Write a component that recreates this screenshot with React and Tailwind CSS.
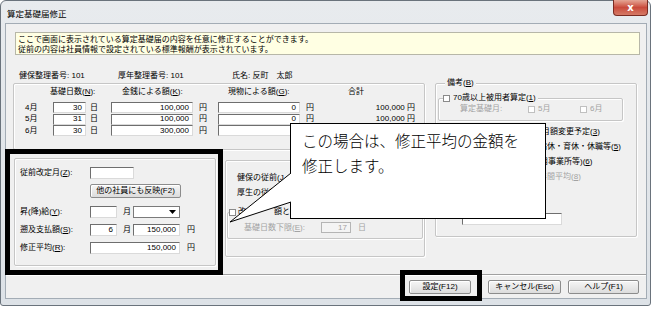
import React from "react";

const U = ({ children }) => <span className="underline">{children}</span>;

function Edit({ className = "", children }) {
  return (
    <div
      className={`bg-white border border-t-[#6e6e6e] border-l-[#6e6e6e] border-r-[#dadada] border-b-[#dadada] flex items-center justify-end pr-[3px] leading-none ${className}`}
    >
      {children}
    </div>
  );
}

function Check({ className = "" }) {
  return (
    <span
      className={`inline-block w-[7px] h-[7px] border border-[#8a8a8a] bg-white shrink-0 ${className}`}
    />
  );
}

function Group({ className = "", children }) {
  return (
    <div
      className={`relative border border-[#c6c6c6] rounded-[2px] shadow-[inset_1px_1px_0_#fff,1px_1px_0_#fff] ${className}`}
    >
      {children}
    </div>
  );
}

function Btn({ className = "", children }) {
  return (
    <div
      className={`flex items-center justify-center border border-[#8c8c8c] rounded-[2px] bg-gradient-to-b from-[#f6f6f6] to-[#dcdcdc] shadow-[inset_1px_1px_0_#fff] ${className}`}
    >
      {children}
    </div>
  );
}

export default function App() {
  return (
    <div className="relative w-[658px] h-[312px] bg-white overflow-hidden text-[8px] leading-[10px] text-black font-['Liberation_Sans','Noto_Sans_CJK_JP',sans-serif]">
      {/* window */}
      <div className="w-[651px] h-[306px] rounded-t-[6px] rounded-b-[3px] border border-[#6a737c] bg-gradient-to-b from-[#e8ebee] via-[#e2e6ea] to-[#dde2e7] flex flex-col">
        {/* title bar */}
        <div className="h-[22px] flex items-start justify-between">
          <div className="pl-[6px] pt-[8px] text-[8.5px] leading-[10px]">算定基礎届修正</div>
          <div className="mr-[2px] -mt-[1px] w-[35px] h-[16px] rounded-b-[4px] border border-t-0 border-[#7a2b22] bg-gradient-to-b from-[#e4a595] via-[#c94a3c] to-[#d57a66] flex items-center justify-center text-white text-[10px] font-bold leading-none font-['DejaVu_Sans',sans-serif]">
            x
          </div>
        </div>

        {/* client area */}
        <div className="ml-[4px] w-[642px] h-[276px] bg-[#f0f0f0] border border-[#a3acb5] flex flex-col">
          {/* info box */}
          <div className="mt-[8px] ml-[9px] w-[625px] h-[23px] bg-[#ffffe3] border border-[#b7b7a8] pl-[2px] pt-[2px] leading-[10px]">
            <div>ここで画面に表示されている算定基礎届の内容を任意に修正することができます。</div>
            <div>従前の内容は社員情報で設定されている標準報酬が表示されています。</div>
          </div>

          {/* header */}
          <div className="mt-[16px] ml-[13px] h-[10px] flex">
            <span className="w-[99px]">健保整理番号: 101</span>
            <span className="w-[114px]">厚年整理番号: 101</span>
            <span>氏名: 反町　太郎</span>
          </div>

          {/* body */}
          <div className="mt-[2px] flex">
            {/* left column */}
            <div className="ml-[7px] w-[412px] flex flex-col">
              <Group className="h-[67px]">
                <div className="mt-[3px] flex h-[10px]">
                  <span className="ml-[36px] w-[72px]">
                    基礎日数(<U>N</U>):
                  </span>
                  <span className="w-[106px]">
                    金銭による額(<U>K</U>):
                  </span>
                  <span className="w-[120px]">
                    現物による額(<U>G</U>):
                  </span>
                  <span>合計</span>
                </div>
                <div className="mt-[5px] flex flex-col gap-[0.5px]">
                  {[
                    ["4月", "30", "100,000", "0", "100,000"],
                    ["5月", "31", "100,000", "0", "100,000"],
                    ["6月", "30", "300,000", "", ""],
                  ].map((r) => (
                    <div key={r[0]} className="flex items-center h-[11px]">
                      <span className="w-[39px] pl-[11px]">{r[0]}</span>
                      <Edit className="w-[33px] h-[11px]">{r[1]}</Edit>
                      <span className="ml-[4px] w-[21px]">日</span>
                      <Edit className="w-[82px] h-[11px]">{r[2]}</Edit>
                      <span className="ml-[6px] w-[19px]">円</span>
                      <Edit className="w-[82px] h-[11px]">{r[3]}</Edit>
                      <span className="ml-[6px] w-[8px]">{r[3] ? "円" : ""}</span>
                      <span className="w-[101px] text-right">{r[4] ? `${r[4]} 円` : ""}</span>
                    </div>
                  ))}
                </div>
              </Group>

              <div className="flex items-start">
                {/* lower-left group */}
                <Group className="ml-[1px] mt-[8px] w-[202px] h-[108px]">
                  <div className="mt-[8px] flex items-center h-[12px]">
                    <span className="pl-[5px] w-[75px]">
                      従前改定月(<U>Z</U>):
                    </span>
                    <Edit className="w-[44px] h-[12px]" />
                  </div>
                  <Btn className="mt-[5px] ml-[75px] w-[91px] h-[14px]">他の社員にも反映(F2)</Btn>
                  <div className="mt-[8px] flex items-center h-[12px]">
                    <span className="pl-[5px] w-[75px]">
                      昇(降)給(<U>Y</U>):
                    </span>
                    <Edit className="w-[27px] h-[12px]" />
                    <span className="ml-[6px] w-[10px]">月</span>
                    <div className="w-[47px] h-[12px] bg-white border border-[#7a7a7a] flex items-center justify-end pr-[3px]">
                      <svg width="7" height="4" viewBox="0 0 7 4">
                        <path d="M0 0H7L3.5 4Z" fill="#000" />
                      </svg>
                    </div>
                  </div>
                  <div className="mt-[6px] flex items-center h-[12px]">
                    <span className="pl-[5px] w-[75px]">
                      遡及支払額(<U>S</U>):
                    </span>
                    <Edit className="w-[27px] h-[12px]">6</Edit>
                    <span className="ml-[6px] w-[10px]">月</span>
                    <Edit className="w-[47px] h-[12px]">150,000</Edit>
                    <span className="ml-[7px]">円</span>
                  </div>
                  <div className="mt-[6px] flex items-center h-[12px]">
                    <span className="pl-[5px] w-[75px]">
                      修正平均(<U>R</U>):
                    </span>
                    <Edit className="w-[90px] h-[12px]">150,000</Edit>
                    <span className="ml-[7px]">円</span>
                  </div>
                </Group>

                {/* middle group */}
                <Group className="ml-[9px] mt-[10px] w-[200px] h-[97px]">
                  <div className="mt-[12px] pl-[11px]">
                    健保の従前(<U>J</U>
                  </div>
                  <div className="mt-[5px] pl-[11px]">厚生の従前</div>
                  <Group className="mt-[14px] mx-[1px] h-[27px]">
                    <div className="absolute -top-[6px] left-[1px] flex items-center gap-[2px] bg-[#f0f0f0] pr-[2px]">
                      <Check />
                      <span>改</span>
                      <span className="ml-[26px]">額とす</span>
                    </div>
                    <div className="mt-[9px] flex items-center h-[11px] text-[#a3a3a3]">
                      <span className="pl-[16px] w-[93px]">
                        基礎日数下限(<U>E</U>):
                      </span>
                      <div className="w-[30px] h-[11px] bg-[#f4f4f4] border border-[#b5b5b5] flex items-center justify-end pr-[3px]">
                        17
                      </div>
                      <span className="ml-[7px]">日</span>
                    </div>
                  </Group>
                </Group>
              </div>
            </div>

            {/* right column: 備考 */}
            <Group className="ml-[10px] w-[202px] h-[154px]">
              <div className="absolute -top-[6px] left-[9px] bg-[#f0f0f0] px-[2px]">
                備考(<U>B</U>)
              </div>
              <Group className="mt-[14px] ml-[2px] w-[185px] h-[23px]">
                <div className="absolute -top-[6px] left-[4px] flex items-center gap-[3px] bg-[#f0f0f0] pr-[2px]">
                  <Check />
                  <span>70歳以上被用者算定(<U>1</U>)</span>
                </div>
                <div className="mt-[5px] flex items-center h-[10px] text-[#a3a3a3]">
                  <span className="pl-[21px] w-[89px]">算定基礎月:</span>
                  <Check className="border-[#c0c0c0]" />
                  <span className="ml-[3px] w-[42px]">5月</span>
                  <Check className="border-[#c0c0c0]" />
                  <span className="ml-[3px]">6月</span>
                </div>
              </Group>
              <div className="mt-[6px] flex flex-col gap-[5px]">
                <div className="h-[10px] whitespace-nowrap pl-[106px]">
                  月額変更予定(<U>3</U>)
                </div>
                <div className="h-[10px] whitespace-nowrap pl-[103px]">
                  病休・育休・休職等(<U>5</U>)
                </div>
                <div className="h-[10px] whitespace-nowrap pl-[104px]">
                  用事業所等)(<U>6</U>)
                </div>
                <div className="h-[10px] whitespace-nowrap pl-[103px] text-[#a3a3a3]">
                  年間平均(<U>8</U>)
                </div>
              </div>
              <Edit className="mt-[31px] ml-[26px] w-[100px] h-[12px]" />
            </Group>
          </div>

          {/* separator */}
          <div className="mt-[8px] h-[2px] border-t border-[#a0a0a0] border-b border-b-white" />

          {/* buttons */}
          <div className="mt-[4px] flex justify-end pr-[7px]">
            <Btn className="w-[62px] h-[14px]">設定(F12)</Btn>
            <Btn className="ml-[17px] w-[73px] h-[14px]">キャンセル(Esc)</Btn>
            <Btn className="ml-[7px] w-[71px] h-[14px]">ヘルプ(F1)</Btn>
          </div>
        </div>
      </div>

      {/* annotation: black highlight boxes */}
      <div className="absolute left-[5px] top-[149px] w-[218px] h-[126px] border-[5px] border-black" />
      <div className="absolute left-[400px] top-[270px] w-[82px] h-[31px] border-[5px] border-black" />

      {/* callout */}
      <div className="absolute left-[290px] top-[123px] w-[256px] h-[96px] bg-white border border-black pl-[11px] pt-[4px] text-[15.5px] leading-[25px] font-['Noto_Sans_CJK_JP',sans-serif] font-light">
        <div>この場合は、修正平均の金額を</div>
        <div>修正します。</div>
      </div>
      <svg
        className="absolute left-0 top-0"
        width="658"
        height="312"
        viewBox="0 0 658 312"
      >
        <path d="M291 173 L230 222 L291 202" fill="#fff" stroke="#000" strokeWidth="1" />
      </svg>
    </div>
  );
}
